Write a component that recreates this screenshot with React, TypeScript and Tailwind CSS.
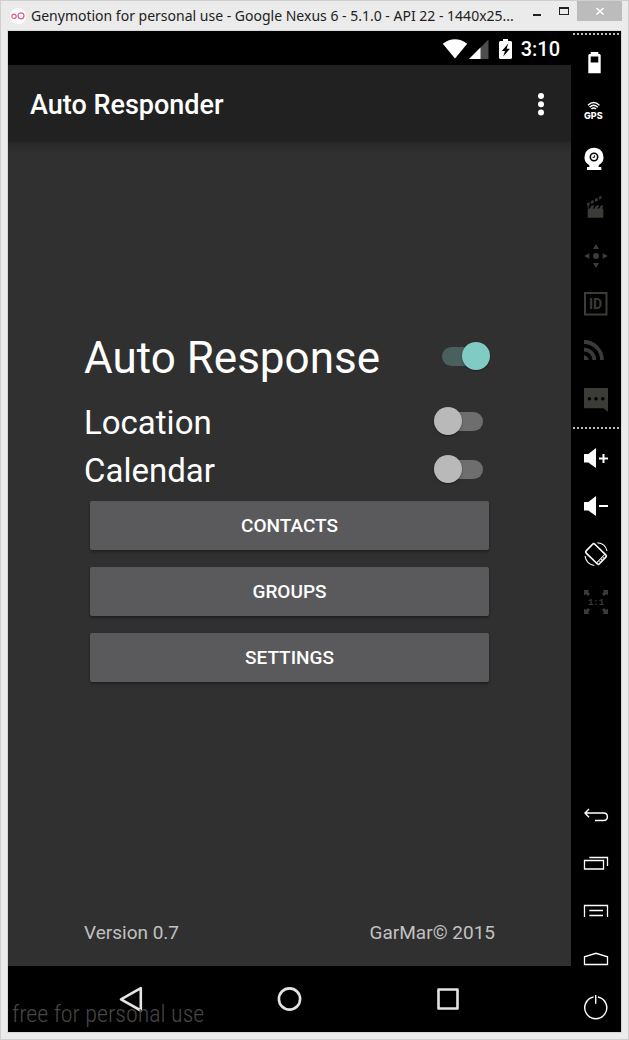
import React, { useState } from "react";

type ToolProps = { label: string; dim?: boolean; children: React.ReactNode };

function Tool({ label, dim, children }: ToolProps) {
  return (
    <button
      type="button"
      aria-label={label}
      className={
        "flex h-12 w-full items-center justify-center " +
        (dim ? "text-[#3b3b38]" : "text-white")
      }
    >
      <svg viewBox="0 0 24 24" className="size-6 overflow-visible" fill="currentColor">
        {children}
      </svg>
    </button>
  );
}

function Divider() {
  return (
    <div className="mx-[2px] h-[2px] shrink-0 bg-[repeating-linear-gradient(90deg,#bdbdbd_0_2px,transparent_2px_4px)]" />
  );
}

const speaker = "M0 8h4.3L12 2v20l-7.7-5.5H0z";

function Toolbar() {
  return (
    <aside className="flex w-[50px] shrink-0 flex-col bg-black pt-[2px] pb-px">
      <Divider />
      <div className="py-1">
        <Tool label="Battery">
          <path fillRule="evenodd" d="M6.7 1h7.6v2h1.4l1 1v18.3H4.3V4l1-1h1.4zM6.7 5.5v6h7.6v-6z" />
        </Tool>
        <Tool label="GPS">
          <g fill="none" stroke="currentColor" strokeWidth="1.5">
            <path d="M4 6.2Q9.7.8 15.4 6.2M5.6 8.2q4.1-3.8 8.2 0M7.4 10q2.3-2 4.6 0" />
          </g>
          <text x="0" y="20" className="font-[Inter,sans-serif] text-[9px] font-extrabold">
            GPS
          </text>
        </Tool>
        <Tool label="Camera">
          <path
            fillRule="evenodd"
            d="M10 .7a9.3 9.3 0 0 1 5 17.2l-.6 2H17.3V23H3v-3.1h2.6l-.6-2A9.3 9.3 0 0 1 10 .7zM10 5.500a4.500 4.500 0 1 0 0 9 4.500 4.500 0 0 0 0-9z"
          />
          <circle cx="10" cy="10" r="2.900" />
          <path d="M10.400 8.300v2H8.600" fill="none" stroke="#000" strokeWidth="1" />
        </Tool>
        <Tool label="Capture" dim>
          <path d="M3.7 13.500h15.6v9.200H3.7zM3.7 10.6h2.1l-2.1 3zM7.6 10.6h3l-2.2 3.400h-3zM12.3 10.6h3l-2.2 3.400h-3zM17 10.6h2.3v.4l-1.8 3h-2.7z" />
          <path d="M3 8.3l2.3-1.2.5 2.6L3.4 11zM6.7 6.3l2.6-1.4.6 2.7-2.7 1.5zM10.8 4.1l2.6-1.4.6 2.7-2.6 1.5zM14.8 2L17 .8l.7 2.4-2.3 1.3z" />
        </Tool>
        <Tool label="Directional pad" dim>
          <circle cx="12" cy="13" r="3" />
          <path d="M12 1l3 5H9zM12 25l3-5H9zM.3 13l5-3v6zM23.700 13l-5-3v6z" />
        </Tool>
        <Tool label="Identifiers" dim>
          <path d="M1 2h21.5v21.5H1z" fill="none" stroke="currentColor" strokeWidth="2" />
          <text x="5" y="18" className="font-[Roboto,sans-serif] text-[14px] font-bold">
            ID
          </text>
        </Tool>
        <Tool label="Network" dim>
          <path d="M0 16.5A4.5 4.5 0 0 1 4.5 21H0z" />
          <path
            d="M0 10.7A10.3 10.3 0 0 1 10.3 21M0 3A18 18 0 0 1 18 21"
            fill="none"
            stroke="currentColor"
            strokeWidth="3.8"
          />
        </Tool>
        <Tool label="Phone" dim>
          <path d="M0 1h24v23.7l-4.5-3.4H0z" />
          <g fill="#000">
            <circle cx="5.4" cy="11.7" r="1.8" />
            <circle cx="12" cy="11.7" r="1.8" />
            <circle cx="18.8" cy="11.7" r="1.8" />
          </g>
        </Tool>
      </div>
      <Divider />
      <div className="pt-[5px]">
        <Tool label="Volume up">
          <path d={speaker} />
          <path d="M15 12.500h9M19.5 8v9" fill="none" stroke="currentColor" strokeWidth="2" />
        </Tool>
        <Tool label="Volume down">
          <path d={speaker} />
          <path d="M15 12h9" fill="none" stroke="currentColor" strokeWidth="2" />
        </Tool>
        <Tool label="Rotate">
          <g fill="none" stroke="currentColor" strokeWidth="1.6">
            <g transform="rotate(44 12 12)">
              <rect x="2.8" y="5.8" width="18.4" height="12.4" rx="1.6" />
              <path d="M18.600 6v12" strokeWidth="1" />
              <path d="M19.8 9v6" strokeDasharray="1.5 1" strokeWidth="1" />
            </g>
            <path d="M13.3.8Q21.5 1.600 23 9M1 14q1.200 8 9.300 9.500" strokeWidth="1.100" />
          </g>
        </Tool>
        <Tool label="Pixel perfect" dim>
          <path d="M0 0h5.500L4 1.700 6 4 4 6 1.700 4 0 5.500zM24 0h-5.500L20 1.700 18 4l2 2 2.300-2L24 5.500zM0 24h5.500L4 22.300 6 20l-2-2-2.300 2L0 18.500zM24 24h-5.500l1.500-1.700-2-2.300 2-2 2.300 2 1.700-1.500z" />
          <text
            x="12"
            y="15"
            textAnchor="middle"
            className="font-['Liberation_Mono',monospace] text-[9px] font-bold"
          >
            1:1
          </text>
        </Tool>
      </div>
      <div className="mt-auto">
        <Tool label="Back">
          <path
            d="M5 6L1 10l4 4.200M1 10h18.500c5.200 0 5.200 7.500 0 7.500H11"
            fill="none"
            stroke="currentColor"
            strokeWidth="1.400"
          />
        </Tool>
        <Tool label="Recent apps">
          <path
            d="M.5 9.500h19v8.500H.5zM5.300 6.500h18.200V15"
            fill="none"
            stroke="currentColor"
            strokeWidth="1.300"
          />
        </Tool>
        <Tool label="Menu">
          <path
            d="M.5 18V6.500h23V18M5.300 11.500H19M5.300 16.500H19"
            fill="none"
            stroke="currentColor"
            strokeWidth="1.300"
          />
        </Tool>
        <Tool label="Home">
          <path
            d="M.5 17.500V9.800L12 6.300l11.500 3.500v7.700z"
            fill="none"
            stroke="currentColor"
            strokeWidth="1.300"
          />
        </Tool>
        <Tool label="Power">
          <path
            d="M9.500 2a11 11 0 1 0 4.500 0M11.700 0v8.700"
            fill="none"
            stroke="currentColor"
            strokeWidth="1.400"
          />
        </Tool>
      </div>
    </aside>
  );
}

function TitleBar() {
  return (
    <header className="flex h-[29px] items-center">
      <svg viewBox="0 0 16 16" className="ml-[3px] size-4 shrink-0" aria-hidden="true">
        <circle cx="8" cy="8" r="8" fill="#fff" />
        <g fill="none" stroke="#e0578d" strokeWidth="1.200">
          <circle cx="4" cy="8.300" r="2.200" />
          <circle cx="11" cy="7.800" r="3" />
        </g>
      </svg>
      <h1 className="ml-[5px] min-w-0 flex-1 whitespace-nowrap font-['Noto_Sans',sans-serif] text-[14px] text-[#222]">
        Genymotion for personal use - Google Nexus 6 - 5.1.0 - API 22 - 1440x25...
      </h1>
      <div className="flex self-start">
        <button type="button" aria-label="Minimize" className="flex h-5 w-7 items-center justify-center">
          <svg viewBox="0 0 12 12" className="size-3" aria-hidden="true">
            <path d="M2 9h8v2H2z" fill="#222" />
          </svg>
        </button>
        <button type="button" aria-label="Maximize" className="flex h-5 w-[26px] items-center justify-center">
          <svg viewBox="0 0 12 12" className="size-3" aria-hidden="true">
            <path fillRule="evenodd" d="M1 2h10v8H1zM2 4v5h8V4z" fill="#222" />
          </svg>
        </button>
        <button type="button" aria-label="Close" className="flex h-5 w-[45px] items-center justify-center bg-[#bcbcbc]">
          <svg viewBox="0 0 10 10" className="size-[10px]" aria-hidden="true">
            <path d="M1.500 2l7 6.500M8.500 2l-7 6.500" stroke="#fff" strokeWidth="1.700" />
          </svg>
        </button>
      </div>
    </header>
  );
}

function StatusBar() {
  return (
    <div className="flex h-[34px] items-center bg-black pt-px pr-[11px] text-white">
      <svg viewBox="0 0 26 20" className="ml-auto h-5 w-[26px]" aria-hidden="true">
        <path d="M13 19.500L.8 4.700Q13-4.200 25.200 4.700z" fill="#fff" />
      </svg>
      <svg viewBox="0 0 20 20" className="ml-px h-5 w-5" aria-hidden="true">
        <path d="M19.500.5V20H0z" fill="#4d4d4d" />
        <path d="M11.500 8.500V20H0z" fill="#fff" />
      </svg>
      <svg viewBox="0 0 13 20" className="ml-[10px] h-5 w-[13px]" aria-hidden="true">
        <path d="M4 0h5v2h3l1 1v16l-1 1H1l-1-1V3l1-1h3z" fill="#fff" />
        <path d="M9.300 4.500L2.800 12h3.200L4.200 17.500 10.900 9.800H7.600z" fill="#000" />
      </svg>
      <span className="ml-[9px] pt-px text-[20px] leading-none font-medium">3:10</span>
    </div>
  );
}

type SwitchRowProps = {
  id: string;
  label: string;
  big?: boolean;
  checked: boolean;
  onChange: (value: boolean) => void;
};

function SwitchRow({ id, label, big, checked, onChange }: SwitchRowProps) {
  return (
    <div className={"flex items-center justify-between pr-[5px] " + (big ? "mb-[13px] h-14" : "h-12")}>
      <label htmlFor={id} className={"pt-[3px] " + (big ? "text-[44px]" : "text-[33px]")}>
        {label}
      </label>
      <input
        id={id}
        type="checkbox"
        role="switch"
        checked={checked}
        onChange={(e) => onChange(e.target.checked)}
        className="relative h-7 w-14 appearance-none before:absolute before:top-[5px] before:left-2 before:h-[19px] before:w-[41px] before:rounded-full before:bg-[#6e6e6e] after:absolute after:top-0 after:left-0 after:size-7 after:rounded-full after:bg-[#b9b9b9] after:shadow-[0_1px_2px_rgba(0,0,0,0.4)] checked:before:bg-[#4a605e] checked:after:left-7 checked:after:bg-[#80cbc4]"
      />
    </div>
  );
}

function PhoneScreen() {
  const [auto, setAuto] = useState(true);
  const [location, setLocation] = useState(false);
  const [calendar, setCalendar] = useState(false);

  return (
    <main className="flex min-w-0 flex-1 flex-col bg-[#303030] font-[Roboto,sans-serif] text-white">
      <StatusBar />
      <div className="flex h-[77px] items-center justify-between bg-[#212121] pt-[3px] pr-[18px] pl-[22px]">
        <h2 className="text-[27px] font-medium">Auto Responder</h2>
        <button type="button" aria-label="More options" className="flex h-10 w-6 items-center justify-center">
          <svg viewBox="0 0 6 24" className="h-6 w-[6px]" fill="#fff" aria-hidden="true">
            <circle cx="3" cy="3" r="3" />
            <circle cx="3" cy="11.200" r="3" />
            <circle cx="3" cy="19.500" r="3" />
          </svg>
        </button>
      </div>
      <div className="h-3 bg-linear-to-b from-[#282828] to-[#303030]" />
      <div className="flex flex-1 flex-col px-[76px] pt-[174px]">
        <SwitchRow id="auto" label="Auto Response" big checked={auto} onChange={setAuto} />
        <SwitchRow id="location" label="Location" checked={location} onChange={setLocation} />
        <SwitchRow id="calendar" label="Calendar" checked={calendar} onChange={setCalendar} />
        <div className="flex flex-col gap-[17px] px-[6px] pt-2">
          {["CONTACTS", "GROUPS", "SETTINGS"].map((name) => (
            <button
              key={name}
              type="button"
              className="h-[49px] rounded-[2px] bg-[#5a5a5c] pt-[2px] text-[19px] font-medium shadow-[0_2px_3px_rgba(0,0,0,0.35)]"
            >
              {name}
            </button>
          ))}
        </div>
        <footer className="mt-auto flex justify-between pb-[19px] text-[19px] leading-7 text-[#c1c1c1]">
          <span>Version 0.7</span>
          <span>GarMar© 2015</span>
        </footer>
      </div>
      <nav className="relative flex h-[66px] items-center justify-center gap-[130px] bg-black">
        <button type="button" aria-label="Back" className="size-7">
          <svg viewBox="0 0 28 28" className="size-7" fill="none" stroke="#e4e4e4" strokeWidth="2.600" strokeLinejoin="round">
            <path d="M3 14.300L22.800 3.200v22.300z" />
          </svg>
        </button>
        <button type="button" aria-label="Home" className="size-7">
          <svg viewBox="0 0 28 28" className="size-7" fill="none" stroke="#e4e4e4" strokeWidth="2.600">
            <circle cx="13.500" cy="14" r="10.600" />
          </svg>
        </button>
        <button type="button" aria-label="Overview" className="size-7">
          <svg viewBox="0 0 28 28" className="size-7" fill="none" stroke="#e4e4e4" strokeWidth="2.600" strokeLinejoin="round">
            <path d="M4.500 4.500h19v19h-19z" />
          </svg>
        </button>
        <span className="pointer-events-none absolute bottom-1 left-1 font-['Roboto_Condensed',Roboto,sans-serif] text-[24px] leading-7 font-light whitespace-nowrap text-[#474747]">
          free for personal use
        </span>
      </nav>
    </main>
  );
}

export default function App() {
  return (
    <div className="flex min-h-screen flex-col border border-[#cfcfcf] bg-[#ebebeb] px-[6px] pb-[6px]">
      <TitleBar />
      <div className="flex flex-1 border border-[#d6d6d6]">
        <PhoneScreen />
        <Toolbar />
      </div>
    </div>
  );
}
